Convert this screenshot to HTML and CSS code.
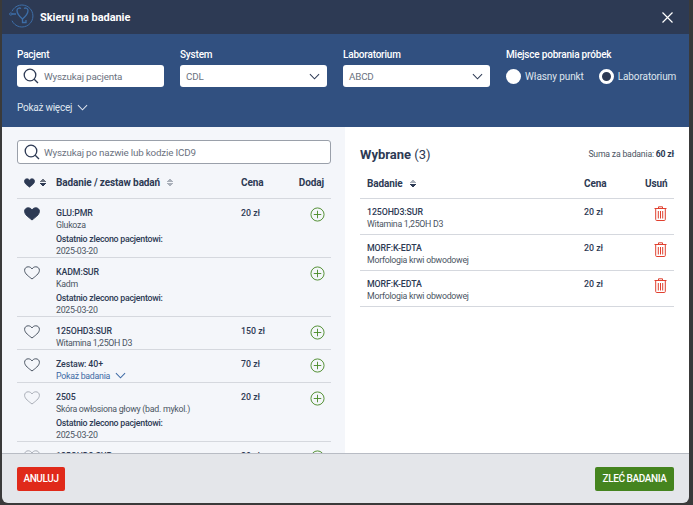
FILE: index.html
```html
<!DOCTYPE html>
<html lang="en">

<head>
    <meta charset="UTF-8" />
    <meta name="viewport" content="width=device-width, initial-scale=1.0" />
    <title>Skieruj na badanie</title>
    <link rel="stylesheet" href="styles.css">
</head>

<body>
    <svg class="defs" width="0" height="0">
        <symbol id="search" viewBox="0 0 16 16">
            <circle cx="7" cy="7" r="5.8" fill="none" stroke="currentColor" stroke-width="1.3" />
            <path d="M11.2 11.2L15 15" stroke="currentColor" stroke-width="1.3" fill="none" />
        </symbol>
        <symbol id="chev" viewBox="0 0 12 7">
            <path d="M1 1l5 5 5-5" fill="none" stroke="currentColor" stroke-width="1.1" />
        </symbol>
        <symbol id="heart" viewBox="0 0 16 14">
            <path d="M8 13C5 10.600 .6 7.800 .6 4.300 .6 2.200 2.200 .8 4.200 .8 5.800 .8 7.200 1.600 8 3 8.800 1.600 10.200 .8 11.800 .8 13.800 .8 15.400 2.200 15.400 4.300 15.400 7.800 11 10.600 8 13Z" stroke="currentColor" stroke-width="1" />
        </symbol>
        <symbol id="plus" viewBox="0 0 16 16">
            <circle cx="8" cy="8" r="7" fill="none" stroke="currentColor" stroke-width="1" />
            <path d="M8 4v8M4 8h8" stroke="currentColor" stroke-width="1" />
        </symbol>
        <symbol id="trash" viewBox="0 0 13 15">
            <path d="M.5 2.500h12M4.500 2.500V.8h4v1.700M1.700 2.500v11a1 1 0 0 0 1 1h7.600a1 1 0 0 0 1-1v-11M4.300 5v7.500M6.500 5v7.500M8.700 5v7.500" fill="none" stroke="currentColor" stroke-width="1" />
        </symbol>
    </svg>

    <div class="modal">
        <div class="title-bar">
            <svg class="logo" width="26" height="26" viewBox="0 0 26 26" fill="none" stroke="#3d6ea8" stroke-width="1">
                <path d="M3 7.300A11 11 0 1 1 3 16.700" />
                <circle cx="1.800" cy="10" r="1.200" />
                <path d="M3 10h4M12 4.500c-1.500-1-4-.3-4 2 0 3 2.500 6 5.500 8.500 3-2.500 5.500-5.500 5.500-8.500 0-2.300-2.500-3-4-2" stroke-width="1.300" />
                <path d="M13.500 15v3.500h3.500v-2.500" stroke-width="1.300" />
            </svg>
            <span class="title">Skieruj na badanie</span>
            <svg class="close" width="11" height="11" viewBox="0 0 11 11">
                <path d="M.5 .5l10 10M10.500 .5l-10 10" stroke="#fff" stroke-width="1.200" />
            </svg>
        </div>

        <div class="filters">
            <div class="filter-row">
                <div class="field">
                    <label>Pacjent</label>
                    <div class="input">
                        <svg class="ico-search"><use href="#search" /></svg>
                        <span>Wyszukaj pacjenta</span>
                    </div>
                </div>
                <div class="field">
                    <label>System</label>
                    <div class="input select">
                        <span>CDL</span>
                        <svg class="ico-chev"><use href="#chev" /></svg>
                    </div>
                </div>
                <div class="field">
                    <label>Laboratorium</label>
                    <div class="input select">
                        <span>ABCD</span>
                        <svg class="ico-chev"><use href="#chev" /></svg>
                    </div>
                </div>
                <div class="field">
                    <label>Miejsce pobrania próbek</label>
                    <div class="radios">
                        <span class="radio"></span><span class="radio-label">Własny punkt</span>
                        <span class="radio checked"></span><span>Laboratorium</span>
                    </div>
                </div>
            </div>
            <div class="more">Pokaż więcej <svg class="ico-chev"><use href="#chev" /></svg></div>
        </div>

        <div class="content">
            <div class="left">
                <div class="search-box">
                    <svg class="ico-search"><use href="#search" /></svg>
                    <span>Wyszukaj po nazwie lub kodzie ICD9</span>
                </div>

                <div class="row head">
                    <div class="fav">
                        <svg class="heart-small"><use href="#heart" /></svg>
                        <span class="sort dark"></span>
                    </div>
                    <div class="name-head">Badanie / zestaw badań <span class="sort"></span></div>
                    <div>Cena</div>
                    <div class="add-head">Dodaj</div>
                </div>

                <div class="row">
                    <div class="fav"><svg class="heart filled"><use href="#heart" /></svg></div>
                    <div>
                        <div class="code">GLU:PMR</div>
                        <div class="desc">Glukoza</div>
                        <div class="last">Ostatnio zlecono pacjentowi:</div>
                        <div class="desc">2025-03-20</div>
                    </div>
                    <div class="price">20 zł</div>
                    <div class="add"><svg class="plus"><use href="#plus" /></svg></div>
                </div>
                <div class="row">
                    <div class="fav"><svg class="heart"><use href="#heart" /></svg></div>
                    <div>
                        <div class="code">KADM:SUR</div>
                        <div class="desc">Kadm</div>
                        <div class="last">Ostatnio zlecono pacjentowi:</div>
                        <div class="desc">2025-03-20</div>
                    </div>
                    <div class="price"></div>
                    <div class="add"><svg class="plus"><use href="#plus" /></svg></div>
                </div>
                <div class="row">
                    <div class="fav"><svg class="heart"><use href="#heart" /></svg></div>
                    <div>
                        <div class="code">125OHD3:SUR</div>
                        <div class="desc">Witamina 1,25OH D3</div>
                    </div>
                    <div class="price">150 zł</div>
                    <div class="add"><svg class="plus"><use href="#plus" /></svg></div>
                </div>
                <div class="row">
                    <div class="fav"><svg class="heart"><use href="#heart" /></svg></div>
                    <div>
                        <div class="code">Zestaw: 40+</div>
                        <div class="desc link">Pokaż badania <svg class="ico-chev"><use href="#chev" /></svg></div>
                    </div>
                    <div class="price">70 zł</div>
                    <div class="add"><svg class="plus"><use href="#plus" /></svg></div>
                </div>
                <div class="row">
                    <div class="fav"><svg class="heart light"><use href="#heart" /></svg></div>
                    <div>
                        <div class="code">2505</div>
                        <div class="desc">Skóra owłosiona głowy (bad. mykol.)</div>
                        <div class="last">Ostatnio zlecono pacjentowi:</div>
                        <div class="desc">2025-03-20</div>
                    </div>
                    <div class="price">20 zł</div>
                    <div class="add"><svg class="plus"><use href="#plus" /></svg></div>
                </div>
                <div class="row">
                    <div class="fav"><svg class="heart light"><use href="#heart" /></svg></div>
                    <div>
                        <div class="code">125OHD3:SUR</div>
                    </div>
                    <div class="price">20 zł</div>
                    <div class="add"><svg class="plus"><use href="#plus" /></svg></div>
                </div>
            </div>

            <div class="right">
                <div class="right-top">
                    <div class="selected">Wybrane <span>(3)</span></div>
                    <div class="sum">Suma za badania: <b>60 zł</b></div>
                </div>
                <div class="sel-row head">
                    <div>Badanie <span class="sort down"></span></div>
                    <div>Cena</div>
                    <div>Usuń</div>
                </div>
                <div class="sel-row">
                    <div>
                        <div class="code">125OHD3:SUR</div>
                        <div class="desc">Witamina 1,25OH D3</div>
                    </div>
                    <div class="price">20 zł</div>
                    <div class="del"><svg class="trash"><use href="#trash" /></svg></div>
                </div>
                <div class="sel-row">
                    <div>
                        <div class="code">MORF:K-EDTA</div>
                        <div class="desc">Morfologia krwi obwodowej</div>
                    </div>
                    <div class="price">20 zł</div>
                    <div class="del"><svg class="trash"><use href="#trash" /></svg></div>
                </div>
                <div class="sel-row">
                    <div>
                        <div class="code">MORF:K-EDTA</div>
                        <div class="desc">Morfologia krwi obwodowej</div>
                    </div>
                    <div class="price">20 zł</div>
                    <div class="del"><svg class="trash"><use href="#trash" /></svg></div>
                </div>
            </div>
        </div>

        <div class="footer">
            <button class="btn cancel">ANULUJ</button>
            <button class="btn order">ZLEĆ BADANIA</button>
        </div>
    </div>
</body>

</html>
```

FILE: styles.css
```css
* {
    box-sizing: border-box;
}

body {
    margin: 0;
    height: 505px;
    overflow: hidden;
    background-color: #3a3a3a;
    font-family: Roboto, sans-serif;
    font-size: 10px;
    color: #2d3a54;
    padding: 0 4px 2px 2px;
}

.defs {
    position: absolute;
}

.modal {
    height: 503px;
    display: flex;
    flex-direction: column;
    overflow: hidden;
    border-radius: 0 0 6px 6px;
}

.title-bar {
    height: 34px;
    flex: none;
    display: flex;
    align-items: center;
    padding: 0 16px 0 7px;
    background-color: #2d3a54;
}

.logo {
    margin-right: 5px;
}

.title {
    flex: 1;
    font-size: 11px;
    font-weight: 700;
    letter-spacing: -0.05px;
    color: #fff;
}

.filters {
    height: 93px;
    flex: none;
    padding: 13px 15px 0;
    background-color: #315080;
    color: #fff;
}

.filter-row {
    display: flex;
    gap: 16px;
}

.field label {
    display: block;
    font-size: 10px;
    font-weight: 500;
    letter-spacing: -0.2px;
    line-height: 15px;
    margin-bottom: 3px;
    white-space: nowrap;
}

.input {
    width: 147px;
    height: 22px;
    display: flex;
    align-items: center;
    gap: 5px;
    padding: 0 7px 0 6px;
    font-size: 9.800px;
    letter-spacing: -0.18px;
    color: #6b7280;
    background-color: #fff;
    border-radius: 3px;
}

.select {
    justify-content: space-between;
}

.ico-search {
    width: 16px;
    height: 16px;
    color: #2d3a54;
}

.ico-chev {
    width: 11px;
    height: 7px;
    color: #2d3a54;
}

.radios {
    display: flex;
    align-items: center;
    height: 22px;
    font-size: 10px;
    letter-spacing: -0.1px;
    color: #dfe5ee;
    white-space: nowrap;
}

.radio {
    flex: none;
    width: 15px;
    height: 15px;
    margin-right: 4px;
    border-radius: 50%;
    background-color: #fff;
}

.radio.checked {
    border: 3px solid #fff;
    background-color: #2d3a54;
}

.radio-label {
    margin-right: 15px;
}

.more {
    margin-top: 15px;
    font-size: 10px;
    letter-spacing: -0.25px;
    color: #dfe5ee;
}

.more .ico-chev {
    color: #dfe5ee;
    margin-left: 3px;
}

.content {
    flex: 1;
    min-height: 0;
    display: flex;
}

.left {
    width: 343px;
    overflow: hidden;
    padding: 13px 14px 0 15px;
    background-color: #f4f6fa;
}

.search-box {
    height: 24px;
    display: flex;
    align-items: center;
    gap: 4px;
    padding: 0 6px;
    font-size: 9.800px;
    letter-spacing: -0.18px;
    color: #6b7280;
    background-color: #fff;
    border: 1px solid #9aa0aa;
    border-radius: 3px;
}

.row {
    display: grid;
    grid-template-columns: 39px 185px 1fr 32px;
    padding: 8px 7px 0 0;
    border-bottom: 1px solid #d5d8de;
    line-height: 12px;
}

.row.head {
    height: 35px;
    align-items: center;
    font-size: 10px;
    font-weight: 700;
    letter-spacing: -0.12px;
    padding: 3px 7px 0 0;
}

.fav {
    display: flex;
    align-items: center;
    align-self: start;
    padding-left: 7px;
    gap: 5px;
}

.head .fav {
    align-self: center;
}

.heart {
    width: 16px;
    height: 14px;
    fill: none;
    color: #4b5563;
}

.heart.filled {
    fill: #2d3a54;
    color: #2d3a54;
}

.heart.light {
    color: #a8adb6;
}

.heart-small {
    width: 11px;
    height: 10px;
    fill: #2d3a54;
    color: #2d3a54;
}

.sort {
    display: inline-block;
    width: 6px;
    height: 9px;
    vertical-align: -1px;
    margin-left: 5px;
    background: conic-gradient(from 140deg at 50% 0, #aab0ba 80deg, transparent 0) top / 6px 4px no-repeat,
        conic-gradient(from -40deg at 50% 100%, #aab0ba 80deg, transparent 0) bottom / 6px 4px no-repeat;
}

.fav .sort {
    margin-left: 0;
}

.sort.dark {
    background: conic-gradient(from 140deg at 50% 0, #6b7280 80deg, transparent 0) top / 6px 4px no-repeat,
        conic-gradient(from -40deg at 50% 100%, #2d3a54 80deg, transparent 0) bottom / 6px 4px no-repeat;
}

.sort.down {
    background: conic-gradient(from 140deg at 50% 0, #aab0ba 80deg, transparent 0) top / 6px 4px no-repeat,
        conic-gradient(from -40deg at 50% 100%, #2d3a54 80deg, transparent 0) bottom / 6px 4px no-repeat;
}

.code {
    font-size: 8.800px;
    font-weight: 500;
    letter-spacing: -0.1px;
}

.desc {
    font-size: 8.800px;
    letter-spacing: -0.27px;
    color: #4b5563;
}

.last {
    margin-top: 2px;
    font-size: 8.800px;
    font-weight: 500;
    letter-spacing: -0.25px;
}

.link {
    color: #3d6aa5;
}

.link .ico-chev {
    color: #3d6aa5;
    margin-left: 3px;
}

.price {
    font-size: 8.800px;
    font-weight: 500;
}

.add {
    display: flex;
    justify-content: flex-end;
}

.add-head {
    text-align: right;
}

.plus {
    width: 15px;
    height: 15px;
    margin-right: -1px;
    color: #4c8c2b;
}

.right {
    flex: 1;
    padding: 16px 15px 0;
    background-color: #fff;
}

.right-top {
    height: 22px;
    display: flex;
    justify-content: space-between;
    align-items: center;
}

.selected {
    font-size: 13px;
    font-weight: 700;
}

.selected span {
    font-weight: 400;
}

.sum {
    font-size: 8.700px;
    letter-spacing: -0.2px;
    color: #4b5563;
}

.sum b {
    color: #2d3a54;
}

.sel-row {
    display: grid;
    grid-template-columns: 217px 1fr 22px;
    height: 36px;
    padding: 7px 7px 0;
    border-bottom: 1px solid #d5d8de;
    line-height: 12px;
}

.sel-row.head {
    height: 30px;
    margin-top: 4px;
    padding: 0 7px;
    align-items: center;
    font-size: 10px;
    font-weight: 700;
    letter-spacing: -0.12px;
}

.del {
    display: flex;
    justify-content: flex-end;
}

.trash {
    width: 13px;
    height: 15px;
    color: #e0402f;
}

.footer {
    height: 50px;
    flex: none;
    display: flex;
    justify-content: space-between;
    align-items: center;
    padding: 0 15px;
    background-color: #e4e6ea;
    border-top: 1px solid #b8bcc4;
}

.btn {
    height: 24px;
    border: none;
    border-radius: 2px;
    font-family: inherit;
    font-size: 10px;
    font-weight: 500;
    letter-spacing: -0.4px;
    color: #fff;
}

.cancel {
    width: 48px;
    padding: 0;
    background-color: #e02a1a;
}

.order {
    width: 79px;
    padding: 0;
    background-color: #45841f;
}
```
